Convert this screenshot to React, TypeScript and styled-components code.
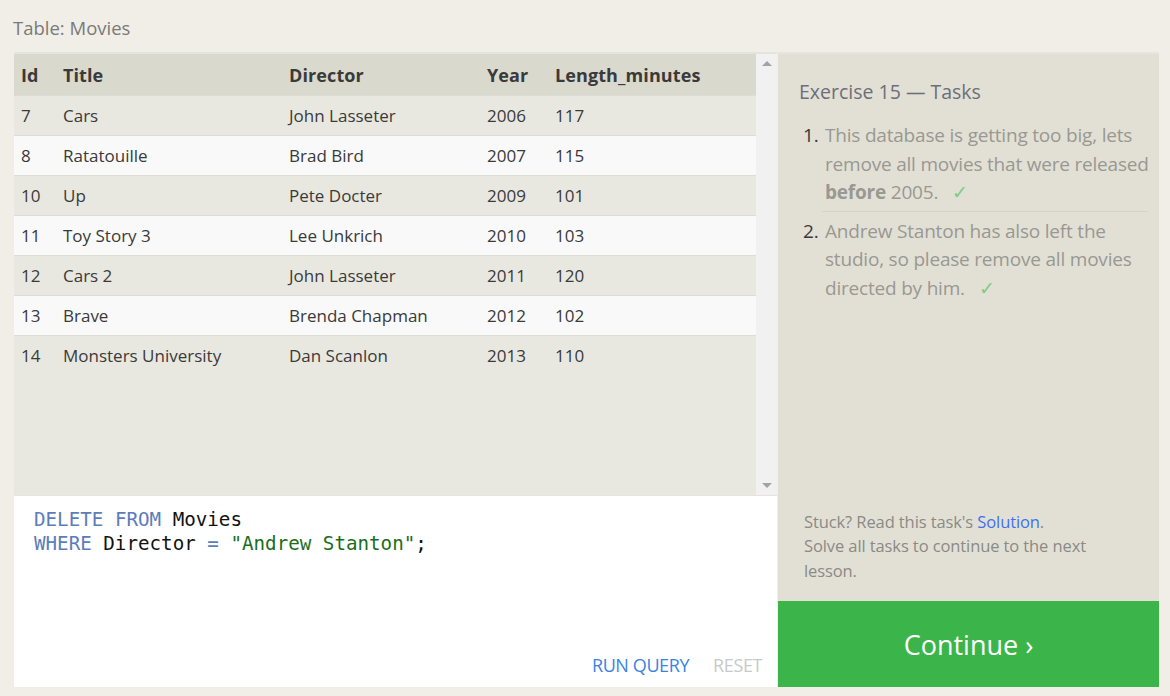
import React from "react";
import styled, { createGlobalStyle } from "styled-components";

const Global = createGlobalStyle`
  html, body { margin: 0; padding: 0; }
  body {
    background: #f0eee7;
    font-family: "Open Sans", "Noto Sans", sans-serif;
    width: 1170px;
    height: 696px;
    overflow: hidden;
  }
`;

const Page = styled.div`
  display: flex;
  flex-direction: column;
  padding: 16px 11px 9px 14px;
  height: 696px;
  box-sizing: border-box;
`;

const PageTitle = styled.div`
  font-size: 18.5px;
  color: #7a7a7a;
  margin: 0 0 12px -1px;
  line-height: 24px;
`;

const Main = styled.div`
  display: flex;
  flex: 1;
  min-height: 0;
`;

const LeftCol = styled.div`
  width: 763px;
  display: flex;
  flex-direction: column;
`;

const TableArea = styled.div`
  display: flex;
  height: 443px;
  background: #e9e8e0;
  border-top: 2px solid #e4e3dc;
  box-sizing: border-box;
`;

const TableWrap = styled.div`
  flex: 1;
  overflow: hidden;
`;

const Table = styled.table`
  width: 100%;
  table-layout: fixed;
  border-collapse: collapse;
  font-size: 17px;
  color: #3a3a3a;
`;

const HeadCell = styled.th<{ $w?: number }>`
  text-align: left;
  font-weight: 700;
  font-size: 18px;
  background: #dad9cd;
  height: 41px;
  padding: 0 0 0 7px;
  width: ${(p) => (p.$w ? `${p.$w - 7}px` : "auto")};
  color: #3a3a3a;
  white-space: nowrap;
  letter-spacing: 0.1px;
`;

const Row = styled.tr<{ $alt: boolean }>`
  background: ${(p) => (p.$alt ? "#f9f9f9" : "#e9e8e0")};
  border-top: 1px solid #dddcd6;
`;

const Cell = styled.td`
  height: 39px;
  padding: 0 0 0 7px;
  color: #3a3a3a;
  white-space: nowrap;
`;

const Scrollbar = styled.div`
  width: 21px;
  background: #f1f1f1;
  display: flex;
  flex-direction: column;
  justify-content: space-between;
  align-items: center;
  padding: 7px 0 7px;
`;

const Arrow = styled.div<{ $down?: boolean }>`
  width: 0;
  height: 0;
  border-left: 5px solid transparent;
  border-right: 5px solid transparent;
  ${(p) =>
    p.$down
      ? "border-top: 5px solid #a3a3a3;"
      : "border-bottom: 5px solid #a3a3a3;"}
`;

const Editor = styled.div`
  flex: 1;
  background: #ffffff;
  border-top: 1px solid #e4e3dc;
  display: flex;
  flex-direction: column;
  padding: 12px 14px 10px 20px;
`;

const Code = styled.pre`
  margin: 0;
  flex: 1;
  font-family: "DejaVu Sans Mono", "Liberation Mono", monospace;
  font-size: 19.2px;
  line-height: 24px;
  color: #111;
`;

const Kw = styled.span`
  color: #5b7dba;
`;

const Str = styled.span`
  color: #1a6e1a;
`;

const Actions = styled.div`
  display: flex;
  justify-content: flex-end;
  gap: 24px;
  padding-right: 1px;
`;

const ActionBtn = styled.span<{ $muted?: boolean }>`
  font-size: 18px;
  color: ${(p) => (p.$muted ? "#c9c9c9" : "#3a84e0")};
  letter-spacing: -0.4px;
`;

const RightCol = styled.div`
  width: 381px;
  margin-left: 1px;
  background: #e2e0d5;
  border-top: 2px solid #e7e6de;
  display: flex;
  flex-direction: column;
`;

const Tasks = styled.div`
  flex: 1;
  padding: 25px 10px 0 21px;
`;

const TasksTitle = styled.div`
  font-size: 19.5px;
  color: #6c6f7a;
  line-height: 26px;
  margin-bottom: 16px;
`;

const TaskList = styled.ol`
  margin: 0;
  padding: 0;
  list-style: none;
`;

const TaskItem = styled.li<{ $first?: boolean }>`
  display: flex;
  font-size: 19px;
  line-height: 28.5px;
  color: #999892;
  padding: ${(p) => (p.$first ? "0 0 4px" : "5px 0 0")};
`;

const Num = styled.span`
  width: 22px;
  color: #3a3a3a;
  flex-shrink: 0;
  margin-left: 4px;
`;

const TaskText = styled.span`
  flex: 1;
  letter-spacing: -0.2px;
`;

const Divider = styled.div`
  height: 1px;
  background: #d5d3c8;
  margin-left: 23px;
  margin-right: 1px;
`;

const Check = styled.span`
  color: #7ecb86;
  margin-left: 14px;
`;

const Help = styled.div`
  padding: 0 40px 18px 26px;
  font-size: 16.5px;
  line-height: 24.5px;
  color: #8a8a86;
  letter-spacing: -0.1px;
`;

const Link = styled.span`
  color: #3f6ff0;
`;

const Continue = styled.div`
  height: 86px;
  background: #3bb54a;
  color: #ffffff;
  font-size: 27px;
  display: flex;
  align-items: center;
  justify-content: center;
  padding-top: 1px;
  box-sizing: border-box;
`;

const rows = [
  [7, "Cars", "John Lasseter", 2006, 117],
  [8, "Ratatouille", "Brad Bird", 2007, 115],
  [10, "Up", "Pete Docter", 2009, 101],
  [11, "Toy Story 3", "Lee Unkrich", 2010, 103],
  [12, "Cars 2", "John Lasseter", 2011, 120],
  [13, "Brave", "Brenda Chapman", 2012, 102],
  [14, "Monsters University", "Dan Scanlon", 2013, 110],
];

export default function App() {
  return (
    <>
      <Global />
      <Page>
        <PageTitle>Table: Movies</PageTitle>
        <Main>
          <LeftCol>
            <TableArea>
              <TableWrap>
                <Table>
                  <thead>
                    <tr>
                      <HeadCell $w={42}>Id</HeadCell>
                      <HeadCell $w={226}>Title</HeadCell>
                      <HeadCell $w={198}>Director</HeadCell>
                      <HeadCell $w={68}>Year</HeadCell>
                      <HeadCell>Length_minutes</HeadCell>
                    </tr>
                  </thead>
                  <tbody>
                    {rows.map((r, i) => (
                      <Row key={i} $alt={i % 2 === 1}>
                        {r.map((c, j) => (
                          <Cell key={j}>{c}</Cell>
                        ))}
                      </Row>
                    ))}
                  </tbody>
                </Table>
              </TableWrap>
              <Scrollbar>
                <Arrow />
                <Arrow $down />
              </Scrollbar>
            </TableArea>
            <Editor>
              <Code>
                <Kw>DELETE</Kw> <Kw>FROM</Kw> Movies{"\n"}
                <Kw>WHERE</Kw> Director <Kw>=</Kw> <Str>"Andrew Stanton"</Str>;
              </Code>
              <Actions>
                <ActionBtn>RUN QUERY</ActionBtn>
                <ActionBtn $muted>RESET</ActionBtn>
              </Actions>
            </Editor>
          </LeftCol>
          <RightCol>
            <Tasks>
              <TasksTitle>Exercise 15 — Tasks</TasksTitle>
              <TaskList>
                <TaskItem $first>
                  <Num>1.</Num>
                  <TaskText>
                    This database is getting too big, lets remove all movies
                    that were released <b>before</b> 2005.
                    <Check>✓</Check>
                  </TaskText>
                </TaskItem>
                <Divider />
                <TaskItem>
                  <Num>2.</Num>
                  <TaskText>
                    Andrew Stanton has also left the studio, so please remove
                    all movies directed by him.
                    <Check>✓</Check>
                  </TaskText>
                </TaskItem>
              </TaskList>
            </Tasks>
            <Help>
              Stuck? Read this task's <Link>Solution</Link>.
              <br />
              Solve all tasks to continue to the next lesson.
            </Help>
            <Continue>Continue ›</Continue>
          </RightCol>
        </Main>
      </Page>
    </>
  );
}
